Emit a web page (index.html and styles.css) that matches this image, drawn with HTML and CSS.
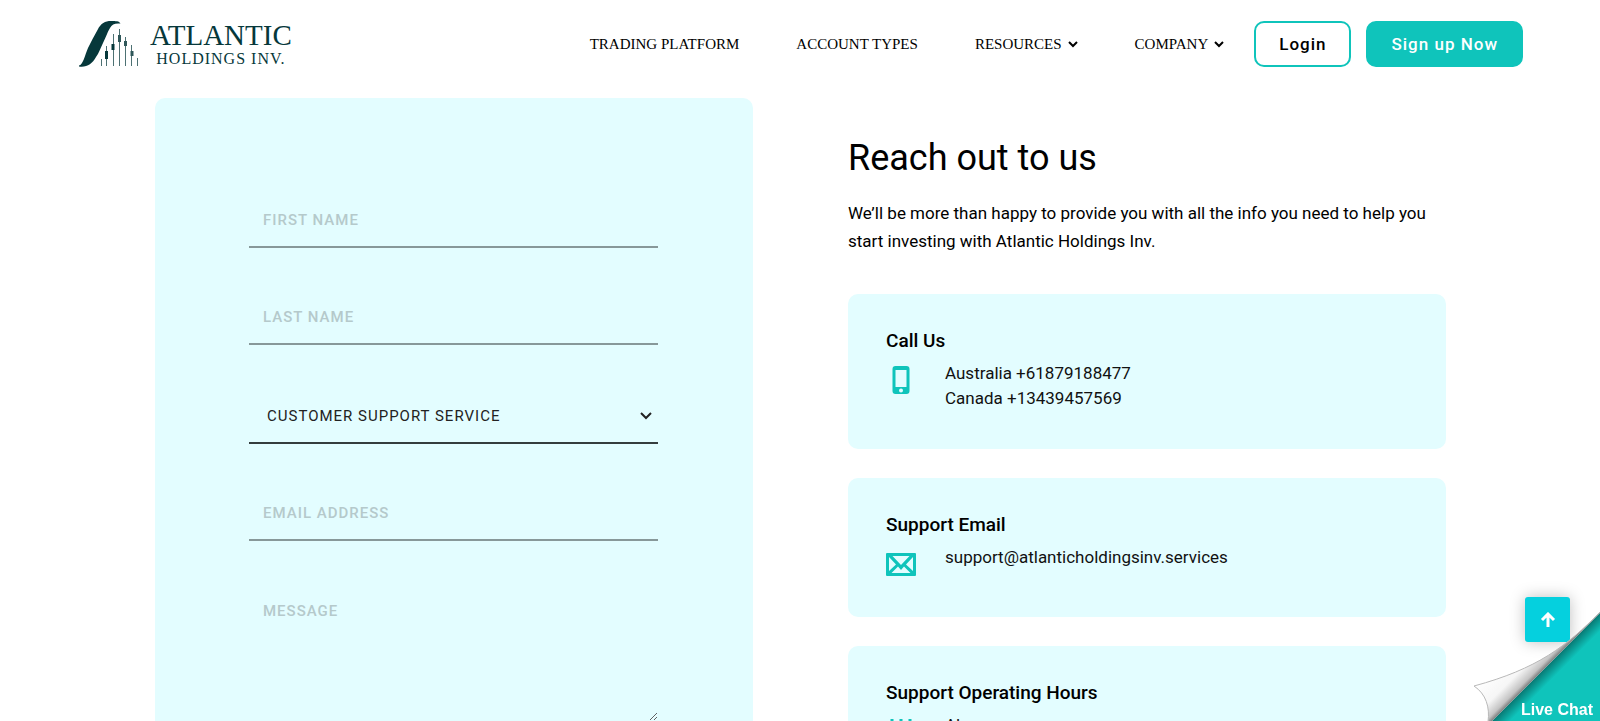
FILE: index.html
```html
<!DOCTYPE html>
<html lang="en">
<head>
<meta charset="utf-8">
<title>Atlantic Holdings Inv. – Contact</title>
<link rel="stylesheet" href="styles.css">
</head>
<body>
<header class="header">
  <a class="logo" href="#" aria-label="Atlantic Holdings Inv.">
    <svg class="logo-mark" viewBox="0 0 62 48" width="62" height="48" aria-hidden="true">
      <path fill="#06383b" d="M1 45.500C5 45 7 35 10 28C13 22 16 16 19.500 10C23 3 27 1 33 1C38 1 41 1 42.500 3.500C37 3 34 4 32 8C29 13 28 17 25 23C22 29 21 33 18 37C14 44 9 47.500 1 46.500Z"/>
      <path stroke="#4d7173" d="M23.500 39v7M28.500 26v20M35.500 14v32M41.500 9v37M47.500 17v29M53.500 25v21M59.500 38v8"/>
      <path stroke="#06383b" stroke-width="3" d="M28.500 31v8M35 24v6"/>
      <path stroke="#2f5759" stroke-width="3" d="M41.500 15v7M47.500 21v5M54 31v5"/>
    </svg>
    <span class="logo-text"><span class="logo-name">ATLANTIC</span><span class="logo-sub">HOLDINGS INV.</span></span>
  </a>
  <nav class="nav">
    <a class="nav-link" href="#">TRADING PLATFORM</a>
    <a class="nav-link" href="#">ACCOUNT TYPES</a>
    <a class="nav-link" href="#">RESOURCES <svg class="caret" viewBox="0 0 10 7" width="10" height="7"><path d="M1 1l4 4 4-4"/></svg></a>
    <a class="nav-link" href="#">COMPANY <svg class="caret" viewBox="0 0 10 7" width="10" height="7"><path d="M1 1l4 4 4-4"/></svg></a>
  </nav>
  <div class="actions">
    <a class="btn" href="#">Login</a>
    <a class="btn btn-solid" href="#">Sign up Now</a>
  </div>
</header>
<main class="contact">
  <form class="form">
    <input class="field" type="text" placeholder="FIRST NAME" aria-label="First name">
    <input class="field" type="text" placeholder="LAST NAME" aria-label="Last name">
    <div class="select-wrap">
      <select class="field field-select" aria-label="Department"><option>CUSTOMER SUPPORT SERVICE</option></select>
      <svg class="select-caret" viewBox="0 0 12 8" width="12" height="8"><path d="M1 1l5 5 5-5"/></svg>
    </div>
    <input class="field" type="email" placeholder="EMAIL ADDRESS" aria-label="Email address">
    <textarea class="field field-message" placeholder="MESSAGE" aria-label="Message"></textarea>
  </form>
  <section class="info">
    <h1 class="title">Reach out to us</h1>
    <p class="lead">We’ll be more than happy to provide you with all the info you need to help you start investing with Atlantic Holdings Inv.</p>
    <article class="card">
      <h2 class="card-title">Call Us</h2>
      <div class="card-row">
        <svg class="card-icon" viewBox="0 0 30 30" width="30" height="30"><path fill="#0fc4bb" fill-rule="evenodd" d="M9.500 1h11a3 3 0 0 1 3 3v22a3 3 0 0 1-3 3h-11a3 3 0 0 1-3-3V4a3 3 0 0 1 3-3ZM9.500 5v17h11V5ZM15 23.500a2 2 0 1 0 0 4a2 2 0 1 0 0-4Z"/></svg>
        <p class="card-text">Australia +61879188477<br>Canada +13439457569</p>
      </div>
    </article>
    <article class="card">
      <h2 class="card-title">Support Email</h2>
      <div class="card-row">
        <svg class="card-icon" viewBox="0 0 30 30" width="30" height="30"><path fill="#0fc4bb" d="M1 4h28a1 1 0 0 1 1 1v21a1 1 0 0 1-1 1H1a1 1 0 0 1-1-1V5a1 1 0 0 1 1-1Z"/><path fill="#e3fdff" d="M6.500 7h17L15 16ZM3 8l7 7.500-7 6.500ZM27 8l-7 7.500 7 6.500ZM5.500 24l6.500-6.500 3 3.500 3-3.500 6.500 6.500Z"/></svg>
        <p class="card-text">support@atlanticholdingsinv.services</p>
      </div>
    </article>
    <article class="card">
      <h2 class="card-title">Support Operating Hours</h2>
      <div class="card-row">
        <svg class="card-icon" viewBox="0 0 30 30" width="30" height="30"><path fill="none" stroke="#0fc4bb" stroke-width="3" d="M6 2v6M15 2v6M24 2v6M3 8h24v18H3Z"/></svg>
        <p class="card-text">Always</p>
      </div>
    </article>
  </section>
</main>
<a class="to-top" href="#" aria-label="Back to top"><svg viewBox="0 0 16 16" width="16" height="16"><path d="M8 15V3M2 8l6-6 6 6"/></svg></a>
<a class="chat" href="#">
  <svg class="chat-art" viewBox="0 0 128 112" width="128" height="112" aria-hidden="true">
    <defs>
      <linearGradient id="curl" gradientUnits="userSpaceOnUse" x1="30" y1="49" x2="56" y2="75"><stop offset="0" stop-color="#fff"/><stop offset=".6" stop-color="#f6f6f6"/><stop offset=".9" stop-color="#c4c4c4"/><stop offset="1" stop-color="#888"/></linearGradient>
      <linearGradient id="fold" gradientUnits="userSpaceOnUse" x1="65" y1="65" x2="75" y2="75"><stop offset="0" stop-color="#07706b"/><stop offset="1" stop-color="#0fc4bb"/></linearGradient>
    </defs>
    <path fill="url(#fold)" d="M128 4V112H20Z"/>
    <path fill="url(#curl)" d="M128 3C95 37 65 60 2 77C14 85 18 98 16 113H19L128 4Z"/>
    <path fill="none" stroke="#b8b8b8" d="M128 3C95 37 65 60 2 77C14 85 18 98 16 113"/>
  </svg>
  <span class="chat-label">Live Chat</span>
</a>
</body>
</html>
```
FILE: styles.css
```css
* { box-sizing: border-box; }
body { margin: 0; height: 100vh; overflow: hidden; font-family: Roboto, "Liberation Sans", sans-serif; color: #000; background: #fff; }
a { color: inherit; text-decoration: none; }
.header { display: flex; align-items: center; height: 88px; padding: 0 77px 0 78px; }
.logo { display: flex; align-items: center; gap: 10px; color: #06383b; }
.logo-mark { display: block; }
.logo-text { display: flex; flex-direction: column; align-items: center; font-family: "Liberation Serif", serif; }
.logo-name { font-size: 29px; line-height: 30px; }
.logo-sub { font-size: 16px; line-height: 18px; letter-spacing: 1px; }
.nav { display: flex; gap: 57px; margin-left: auto; font-family: "Liberation Serif", serif; font-size: 15px; }
.nav-link { display: flex; align-items: center; gap: 6px; white-space: nowrap; }
.caret, .select-caret { fill: none; stroke: #000; stroke-width: 2; }
.actions { display: flex; gap: 15px; margin-left: 30px; }
.btn { height: 46px; padding: 0 23px; border: 2px solid #0fc4bb; border-radius: 10px; font-size: 17px; font-weight: 500; line-height: 42px; letter-spacing: 1px; }
.btn-solid { background: #0fc4bb; color: #fff; }
.contact { display: grid; grid-template-columns: 1fr 1fr; gap: 95px; padding: 10px 154px 0 155px; }
.form { display: flex; flex-direction: column; gap: 36px; padding: 89px 95px 89px 94px; border-radius: 10px; background: #e3fdff; }
.field { display: block; width: 100%; height: 61px; padding: 7px 14px 0; border: 0; border-bottom: 2px solid #879899; border-radius: 0; background: transparent; font: 500 15px/20px Roboto, sans-serif; letter-spacing: 1px; outline: 0; }
.field::placeholder { color: #b5c9cb; opacity: 1; }
.select-wrap { position: relative; }
.field-select { appearance: none; height: 63px; padding: 9px 18px 0; border-color: #343d3e; color: #222; font-weight: 400; }
.select-caret { position: absolute; right: 6px; top: 31px; stroke: #222; }
.field-message { height: 146px; padding: 24px 14px 0; resize: vertical; }
.info { padding-top: 36px; }
.title { margin: 0; font-size: 36px; font-weight: 400; line-height: 48px; }
.lead { margin: 17px 0 39px; font-size: 17px; line-height: 28px; }
.card { margin-bottom: 29px; padding: 33px 38px 38px; border-radius: 10px; background: #e3fdff; }
.card-title { margin: 0; font-size: 19px; font-weight: 500; line-height: 28px; }
.card-row { display: flex; gap: 29px; padding-top: 6px; }
.card-icon { flex: none; margin-top: 4px; }
.card-text { margin: 0; font-size: 17px; line-height: 25px; color: #111; }
.to-top { position: fixed; right: 30px; bottom: 79px; display: flex; align-items: center; justify-content: center; width: 45px; height: 45px; border-radius: 3px; background: #05d0de; box-shadow: 0 0 15px rgba(0, 0, 0, .25); }
.to-top svg { fill: none; stroke: #fff; stroke-width: 3; }
.chat { position: fixed; right: 0; bottom: 0; }
.chat-art { display: block; }
.chat-label { position: absolute; right: 7px; bottom: 2px; font: 700 16px/18px "Liberation Sans", sans-serif; color: #fff; white-space: nowrap; }
```
